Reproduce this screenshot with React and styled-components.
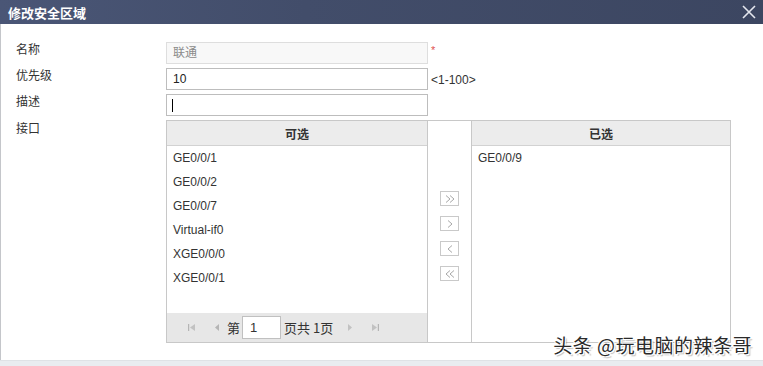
import styled, { createGlobalStyle } from 'styled-components';

const GlobalStyle = createGlobalStyle`
  html, body {
    margin: 0;
    padding: 0;
    background: #ffffff;
  }
  body {
    font-family: "Liberation Sans", "Noto Sans CJK SC", sans-serif;
    font-size: 12px;
    color: #333333;
  }
`;

const Dialog = styled.div`
  position: relative;
  width: 763px;
  height: 366px;
  display: flex;
  flex-direction: column;
  overflow: hidden;
`;

const TitleBar = styled.div`
  height: 24px;
  flex: none;
  display: flex;
  align-items: center;
  justify-content: space-between;
  padding: 0 7px 0 8px;
  background: linear-gradient(90deg, #4a5676 0%, #424d6a 40%, #3c4661 100%);
  color: #ffffff;
  font-family: "Noto Sans CJK SC", sans-serif;
  font-weight: 700;
  font-size: 13px;
`;

const CloseButton = styled.div`
  width: 14px;
  height: 14px;
  display: flex;
`;

const Body = styled.div`
  flex: 1;
  border-left: 1px solid #c4c6ca;
  padding: 18px 0 0 15px;
`;

const Footer = styled.div`
  height: 5px;
  flex: none;
  background: #e9ecf0;
  border-top: 1px solid #dfe2e6;
`;

const Form = styled.div`
  display: grid;
  grid-template-columns: 150px auto;
  row-gap: 4px;
  align-items: start;
`;

const Label = styled.div`
  font-family: "Noto Sans CJK SC", sans-serif;
  font-size: 12px;
  line-height: 14px;
  padding-top: ${({ offset }) => offset || 0}px;
  color: #333333;
`;

const FieldRow = styled.div`
  display: flex;
  align-items: center;
  gap: 3px;
`;

const Input = styled.div`
  box-sizing: border-box;
  width: 262px;
  height: 22px;
  border: 1px solid ${({ disabled }) => (disabled ? '#dedede' : '#bdbdbd')};
  background: ${({ disabled }) => (disabled ? '#f8f8f8' : '#ffffff')};
  color: ${({ disabled }) => (disabled ? '#8a8a8a' : '#222222')};
  padding: 0 6px;
  font-family: "Liberation Sans", "Noto Sans CJK SC", sans-serif;
  font-size: 12px;
  line-height: 20px;
`;

const Caret = styled.span`
  display: inline-block;
  width: 1px;
  height: 13px;
  background: #000000;
  vertical-align: middle;
  margin-left: -1px;
`;

const Required = styled.span`
  color: #e05050;
  font-size: 11px;
  align-self: flex-start;
  margin-top: 2px;
`;

const Hint = styled.span`
  font-size: 12px;
  color: #333333;
  margin-top: 2px;
`;

const Transfer = styled.div`
  display: grid;
  grid-template-columns: 262px 43px 260px;
  height: 223px;
`;

const Panel = styled.div`
  box-sizing: border-box;
  border: 1px solid #c8c8c8;
  display: flex;
  flex-direction: column;
`;

const PanelHeader = styled.div`
  height: 25px;
  flex: none;
  box-sizing: border-box;
  background: #ececec;
  border-bottom: 1px solid #d2d2d2;
  display: flex;
  align-items: center;
  justify-content: center;
  font-family: "Noto Sans CJK SC", sans-serif;
  font-weight: 700;
  font-size: 12px;
  color: #333333;
`;

const ItemList = styled.div`
  flex: 1;
  display: flex;
  flex-direction: column;
`;

const Item = styled.div`
  height: 24px;
  line-height: 24px;
  padding-left: 6px;
  font-size: 12px;
  color: #333333;
`;

const Middle = styled.div`
  box-sizing: border-box;
  border-top: 1px solid #c8c8c8;
  border-bottom: 1px solid #c8c8c8;
  display: flex;
  flex-direction: column;
  align-items: center;
  padding-top: 70px;
  gap: 10px;
`;

const MoveButton = styled.div`
  box-sizing: border-box;
  width: 19px;
  height: 15px;
  border: 1px solid #c9c9c9;
  background: #ffffff;
  display: flex;
  align-items: center;
  justify-content: center;
`;

const Pager = styled.div`
  height: 29px;
  flex: none;
  background: #e7e7e7;
  display: flex;
  align-items: center;
  padding-left: 21px;
  font-family: "Noto Sans CJK SC", sans-serif;
  font-size: 13px;
  color: #333333;
`;

const PagerIcon = styled.span`
  display: flex;
  width: 8px;
  margin-right: ${({ gap }) => gap}px;
`;

const PageInput = styled.div`
  box-sizing: border-box;
  width: 39px;
  height: 23px;
  border: 1px solid #c0c0c0;
  background: #ffffff;
  margin: 0 3px 0 2px;
  padding-left: 7px;
  line-height: 21px;
  font-family: "Liberation Sans", sans-serif;
  font-size: 13px;
`;

const Watermark = styled.div`
  position: absolute;
  right: 11px;
  bottom: 8px;
  font-family: "Noto Sans CJK SC", sans-serif;
  font-size: 19px;
  color: #2a2a2a;
  letter-spacing: 0.5px;
  text-shadow: 1px 1px 0 #ffffff, -1px -1px 0 #ffffff, 1px -1px 0 #ffffff, -1px 1px 0 #ffffff, 2px 2px 1px rgba(0,0,0,0.25);
`;

const FirstIcon = () => (
  <svg width="8" height="9" viewBox="0 0 8 9">
    <rect x="0" y="1" width="1.2" height="7" fill="#b5b5b5" />
    <path d="M7 1 L2 4.5 L7 8 Z" fill="#c2c2c2" />
  </svg>
);
const PrevIcon = () => (
  <svg width="6" height="9" viewBox="0 0 6 9">
    <path d="M5 1 L1 4.5 L5 8 Z" fill="#b5b5b5" />
  </svg>
);
const NextIcon = () => (
  <svg width="6" height="9" viewBox="0 0 6 9">
    <path d="M1 1 L5 4.5 L1 8 Z" fill="#c2c2c2" />
  </svg>
);
const LastIcon = () => (
  <svg width="8" height="9" viewBox="0 0 8 9">
    <path d="M1 1 L6 4.5 L1 8 Z" fill="#c2c2c2" />
    <rect x="6.8" y="1" width="1.2" height="7" fill="#b5b5b5" />
  </svg>
);

// chevrons for the move buttons: dir 1 = right, -1 = left; count 1 or 2
const Chevron = ({ dir, count }) => {
  const paths = [];
  for (let i = 0; i < count; i++) {
    const off = count === 2 ? (i === 0 ? -2 : 2) : 0;
    const x0 = 5 + off - 2 * dir;
    const x1 = 5 + off + 2 * dir;
    paths.push(<path key={i} d={`M${x0} 1.5 L${x1} 5 L${x0} 8.5`} />);
  }
  return (
    <svg width="10" height="10" viewBox="0 0 10 10" fill="none" stroke="#a8a8a8" strokeWidth="1">
      {paths}
    </svg>
  );
};

const available = ['GE0/0/1', 'GE0/0/2', 'GE0/0/7', 'Virtual-if0', 'XGE0/0/0', 'XGE0/0/1'];
const selected = ['GE0/0/9'];

export default function App() {
  return (
    <>
      <GlobalStyle />
      <Dialog>
        <TitleBar>
          <span>修改安全区域</span>
          <CloseButton>
            <svg width="14" height="14" viewBox="0 0 14 14">
              <path d="M1 1 L13 13 M13 1 L1 13" stroke="#e4e7ee" strokeWidth="1.6" />
            </svg>
          </CloseButton>
        </TitleBar>
        <Body>
          <Form>
            <Label>名称</Label>
            <FieldRow>
              <Input disabled>联通</Input>
              <Required>*</Required>
            </FieldRow>
            <Label>优先级</Label>
            <FieldRow>
              <Input>10</Input>
              <Hint>&lt;1-100&gt;</Hint>
            </FieldRow>
            <Label>描述</Label>
            <FieldRow>
              <Input><Caret /></Input>
            </FieldRow>
            <Label offset={1}>接口</Label>
            <Transfer>
              <Panel>
                <PanelHeader>可选</PanelHeader>
                <ItemList>
                  {available.map((name) => (
                    <Item key={name}>{name}</Item>
                  ))}
                </ItemList>
                <Pager>
                  <PagerIcon gap={18}><FirstIcon /></PagerIcon>
                  <PagerIcon gap={5}><PrevIcon /></PagerIcon>
                  <span>第</span>
                  <PageInput>1</PageInput>
                  <span>页共 1页</span>
                  <PagerIcon gap={16} style={{ marginLeft: 14 }}><NextIcon /></PagerIcon>
                  <PagerIcon gap={0}><LastIcon /></PagerIcon>
                </Pager>
              </Panel>
              <Middle>
                <MoveButton><Chevron dir={1} count={2} /></MoveButton>
                <MoveButton><Chevron dir={1} count={1} /></MoveButton>
                <MoveButton><Chevron dir={-1} count={1} /></MoveButton>
                <MoveButton><Chevron dir={-1} count={2} /></MoveButton>
              </Middle>
              <Panel>
                <PanelHeader>已选</PanelHeader>
                <ItemList>
                  {selected.map((name) => (
                    <Item key={name}>{name}</Item>
                  ))}
                </ItemList>
              </Panel>
            </Transfer>
          </Form>
        </Body>
        <Footer />
        <Watermark>头条 @玩电脑的辣条哥</Watermark>
      </Dialog>
    </>
  );
}
